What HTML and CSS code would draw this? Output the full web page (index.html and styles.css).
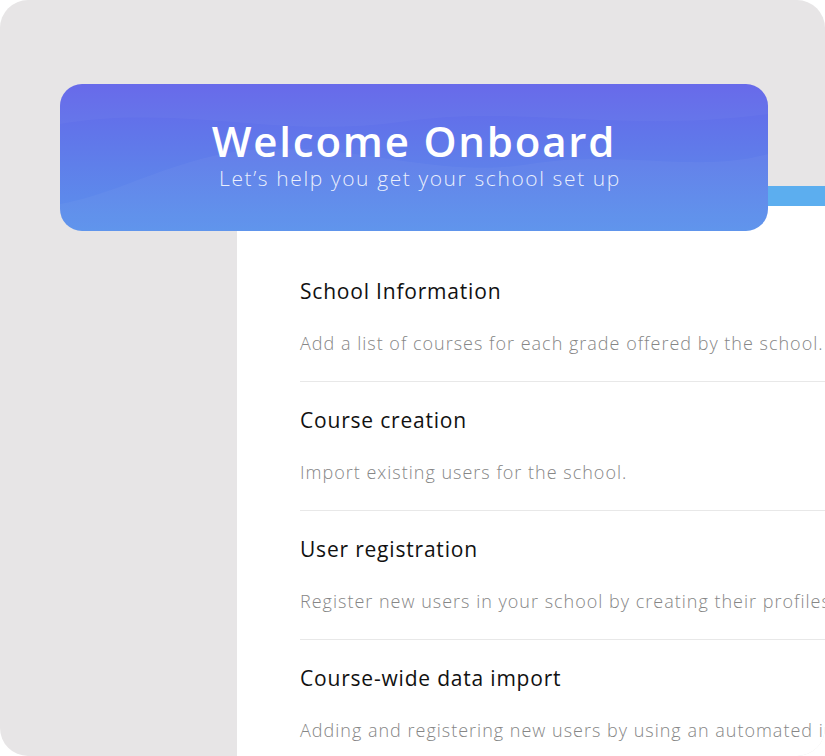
FILE: index.html
```html
<!DOCTYPE html>
<html lang="en">
<head>
    <meta charset="UTF-8">
    <meta name="viewport" content="width=device-width, initial-scale=1.0">
    <title>Welcome Onboard</title>
    <link rel="stylesheet" href="styles.css">
</head>
<body>
    <div class="frame">
        <div class="banner">
            <svg class="waves" viewBox="0 0 708 147" preserveAspectRatio="none">
                <path d="M0 40 C120 20 220 55 340 38 C460 20 560 50 708 30 L708 0 L0 0 Z" fill="rgba(255,255,255,0.03)"/>
                <path d="M0 147 L0 120 C60 110 120 70 200 65 C300 60 380 95 470 80 C560 65 640 90 708 70 L708 147 Z" fill="rgba(255,255,255,0.035)"/>
            </svg>
            <h1>Welcome Onboard</h1>
            <p>Let’s help you get your school set up</p>
        </div>

        <div class="panel">
            <ul class="steps">
                <li class="step">
                    <h3>School Information</h3>
                    <p>Add a list of courses for each grade offered by the school.</p>
                </li>
                <li class="step">
                    <h3>Course creation</h3>
                    <p>Import existing users for the school.</p>
                </li>
                <li class="step">
                    <h3>User registration</h3>
                    <p>Register new users in your school by creating their profiles.</p>
                </li>
                <li class="step">
                    <h3>Course-wide data import</h3>
                    <p>Adding and registering new users by using an automated import.</p>
                </li>
            </ul>
        </div>
    </div>
</body>
</html>
```

FILE: styles.css
```css
body {
    margin: 0;
    background: #fff;
    font-family: "Open Sans", "Liberation Sans", sans-serif;
}
.frame {
    width: 825px;
    height: 756px;
    background: #e7e5e6;
    border-radius: 28px;
    overflow: hidden;
    padding-top: 84px;
    box-sizing: border-box;
}
.banner {
    position: relative;
    z-index: 1;
    width: 708px;
    height: 147px;
    margin-left: 60px;
    border-radius: 22px;
    background: linear-gradient(180deg, #6466ea 0%, #5f7fea 55%, #5b92ec 100%);
    color: #fff;
    text-align: center;
    overflow: hidden;
    box-sizing: border-box;
    padding-top: 35px;
}
.waves {
    position: absolute;
    left: 0;
    top: 0;
    width: 100%;
    height: 100%;
}
.banner h1 {
    position: relative;
    margin: 0;
    font-size: 42px;
    font-weight: 600;
    line-height: 44px;
    letter-spacing: 1.8px;
}
.banner p {
    position: relative;
    margin: 3px 0 0;
    padding-left: 12px;
    font-size: 21px;
    font-weight: 300;
    line-height: 24px;
    letter-spacing: 1.6px;
    color: rgba(255, 255, 255, 0.88);
}
.panel {
    margin: -45px 0 0 237px;
    height: 625px;
    background: #fff;
    border-top: 20px solid #5caeef;
    padding-left: 63px;
    overflow: hidden;
}
.steps {
    list-style: none;
    margin: 0;
    padding: 47px 0 0;
}
.step {
    padding: 23px 0 25px;
    border-bottom: 1px solid #e8e8e8;
}
.step h3 {
    margin: 0;
    font-size: 21px;
    font-weight: 500;
    line-height: 30px;
    letter-spacing: 0.8px;
    color: #111;
}
.step p {
    margin: 24px 0 0;
    font-size: 18px;
    font-weight: 300;
    line-height: 26px;
    letter-spacing: 1px;
    color: #868686;
    white-space: nowrap;
}
```
